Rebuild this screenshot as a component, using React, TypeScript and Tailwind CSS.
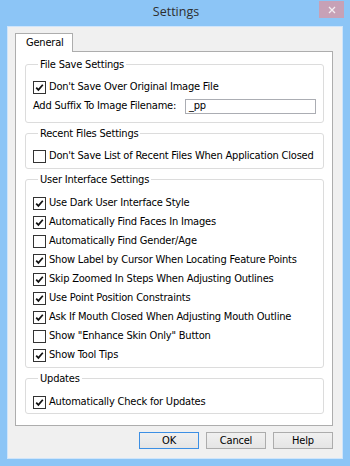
import type { ReactNode } from 'react';

type Item = { label: string; checked: boolean };

const uiItems: Item[] = [
  { label: 'Use Dark User Interface Style', checked: true },
  { label: 'Automatically Find Faces In Images', checked: true },
  { label: 'Automatically Find Gender/Age', checked: false },
  { label: 'Show Label by Cursor When Locating Feature Points', checked: true },
  { label: 'Skip Zoomed In Steps When Adjusting Outlines', checked: true },
  { label: 'Use Point Position Constraints', checked: true },
  { label: 'Ask If Mouth Closed When Adjusting Mouth Outline', checked: true },
  { label: 'Show "Enhance Skin Only" Button', checked: false },
  { label: 'Show Tool Tips', checked: true },
];

function CheckRow({ label, checked }: Item) {
  return (
    <div className="flex items-center h-[19px]">
      <span className="w-[13px] h-[13px] border border-[#333333] bg-white flex items-center justify-center shrink-0">
        {checked && (
          <svg width="11" height="11" viewBox="0 0 11 11">
            <path d="M2.2 5.6 L4.4 7.9 L8.8 2.8" fill="none" stroke="#111" strokeWidth="1.7" />
          </svg>
        )}
      </span>
      <span className="ml-[3px] whitespace-nowrap">{label}</span>
    </div>
  );
}

function Group({ title, children, className }: { title: string; children: ReactNode; className?: string }) {
  return (
    <fieldset className={`border border-[#dcdcdc] rounded-[3px] px-[7px] ${className ?? ''}`}>
      <legend className="ml-[5px] px-[2px] leading-[13px]">{title}</legend>
      {children}
    </fieldset>
  );
}

function DialogButton({ label, primary }: { label: string; primary?: boolean }) {
  return (
    <button
      className={`w-[60px] h-[17px] border text-[11px] leading-none bg-gradient-to-b from-[#f0f0f0] to-[#e5e5e5] ${
        primary ? 'border-[#3c8fe4]' : 'border-[#acacac]'
      }`}
    >
      {label}
    </button>
  );
}

export default function App() {
  return (
    <div
      className="w-[350px] h-[466px] bg-[#8cc5f6] flex flex-col text-[11px] text-black tracking-[-0.2px]"
      style={{ fontFamily: '"DejaVu Sans Condensed", "DejaVu Sans", sans-serif' }}
    >
      {/* Title bar */}
      <div className="h-[26px] shrink-0 flex items-center">
        <div className="flex-1 text-center text-[12.5px] tracking-normal text-[#2e2e2e] pl-[33px] font-['Open_Sans',sans-serif] pb-[1px]">
          Settings
        </div>
        <div className="w-[25px] h-[17px] mr-[6px] self-start mt-[1px] bg-[#c7a1b6] flex items-center justify-center">
          <svg width="8" height="8" viewBox="0 0 8 8">
            <path d="M1 1 L7 7 M7 1 L1 7" stroke="#f4eef2" strokeWidth="1.3" />
          </svg>
        </div>
      </div>

      {/* Client area */}
      <div className="flex-1 mx-[7px] mb-[7px] border border-[#cfe5fb] bg-[#f0f0f0] flex flex-col pl-[7px] pr-[9px] pt-[6px]">
        {/* Tabs */}
        <div className="flex">
          <div className="w-[58px] h-[19px] -mb-[1px] relative z-10 bg-white border border-b-0 border-[#adadad] flex items-center pl-[10px]">
            General
          </div>
        </div>

        {/* Tab panel */}
        <div className="h-[375px] bg-white border border-[#adadad] pl-[9px] pr-[8px] pt-[6px] flex flex-col gap-[4px]">
          <Group title="File Save Settings" className="pt-[7px] pb-[8px]">
            <CheckRow label="Don't Save Over Original Image File" checked />
            <div className="flex items-center mt-[2px] h-[15px]">
              <span className="whitespace-nowrap">Add Suffix To Image Filename:</span>
              <div className="ml-auto w-[131px] h-[15px] border border-[#abadb3] bg-white pl-[3px] flex items-center">
                _pp
              </div>
            </div>
          </Group>

          <Group title="Recent Files Settings" className="pt-[7px] pb-[2px]">
            <CheckRow label="Don't Save List of Recent Files When Application Closed" checked={false} />
          </Group>

          <Group title="User Interface Settings" className="pt-[8px] pb-[2px]">
            {uiItems.map((item) => (
              <CheckRow key={item.label} {...item} />
            ))}
          </Group>

          <Group title="Updates" className="pt-[8px] pb-[1px]">
            <CheckRow label="Automatically Check for Updates" checked />
          </Group>
        </div>

        {/* Buttons */}
        <div className="flex justify-end gap-[7px] mt-[6px]">
          <DialogButton label="OK" primary />
          <DialogButton label="Cancel" />
          <DialogButton label="Help" />
        </div>
      </div>
    </div>
  );
}
